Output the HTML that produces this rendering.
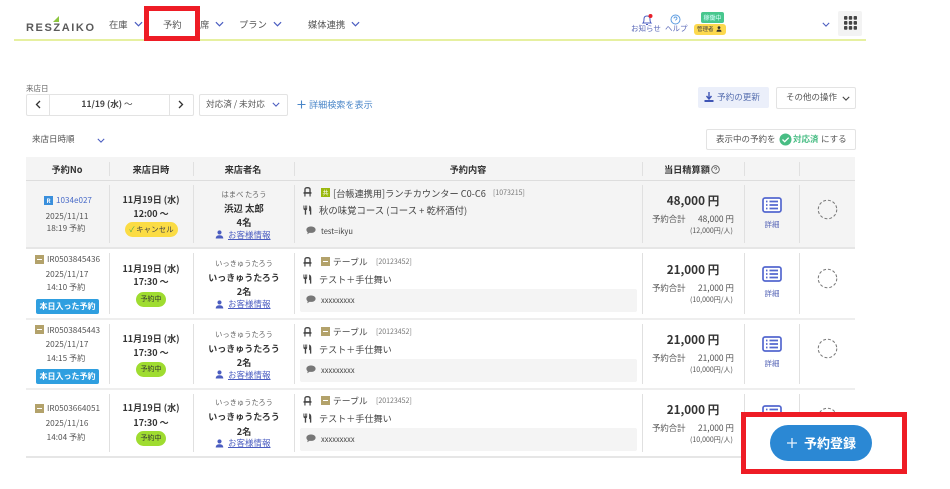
<!DOCTYPE html>
<html lang="ja"><head><meta charset="utf-8"><title>RESZAIKO</title>
<style>
html,body{margin:0;padding:0;background:#fff}
#p{position:relative;width:950px;height:489px;overflow:hidden;background:#fff;font-family:"Noto Sans CJK JP","Liberation Sans",sans-serif;color:#444;font-size:9px;filter:blur(.35px)}
#p div,#p span.a,#p svg{position:absolute}
.t{white-space:nowrap;line-height:1;margin-top:1px}
.c{white-space:nowrap;line-height:1;margin-top:1px;transform:translateX(-50%);text-align:center}
.b{font-weight:700;color:#333}
.bg{background:#f4f4f4}
.sep{width:1px;background:#e0e0e0}
.badge{border-radius:8px;text-align:center;white-space:nowrap}
.lnk{color:#4a5cc0;text-decoration:underline}
.gold{width:9px;height:9px;background:#b3a26b}
.gold:after{content:"";position:absolute;left:2px;top:4px;width:5px;height:1.4px;background:#fff}
.box{position:absolute;border:5px solid #ee1c25;box-sizing:border-box}
</style></head><body><div id="p">
<svg width="0" height="0" style="position:absolute"><defs>
<symbol id="chair" viewBox="0 0 10 11"><path d="M2.200 6V2.500C2.200 1.300 3.200.7 5 .7s2.800.6 2.800 1.800V6" fill="none" stroke="#444" stroke-width="1.500"/><path d="M.6 5.600h8.800v1.800H.6zM1.500 7.400h1.300v3.100H1.500zM7.200 7.400h1.300v3.100H7.200z" fill="#444"/></symbol>
<symbol id="fork" viewBox="0 0 10 11"><path d="M.5.500h.9v3h.7v-3h.9v3h.7v-3h.9v3.800c0 .7-.5 1.200-1.100 1.400v5H2v-5C1 5.500.5 5 .5 4.300zM6.800.500c1.400.3 2.400 1.600 2.400 3.700v6.500H7.700V6.700H6.800z" fill="#444"/></symbol>
<symbol id="msg" viewBox="0 0 10 9"><path d="M5 .5C7.600.5 9.600 1.800 9.600 3.700S7.600 6.900 5 6.900c-.5 0-.9 0-1.300-.1L1.200 8.300l.5-2.100C.9 5.600.4 4.700.4 3.700.4 1.800 2.400.5 5 .5z" fill="#777"/></symbol>
<symbol id="user" viewBox="0 0 10 10"><circle cx="5" cy="2.700" r="2.300" fill="#4a5cc0"/><path d="M.8 9.500C.8 6.900 2.500 5.800 5 5.800s4.200 1.100 4.200 3.700z" fill="#4a5cc0"/></symbol>
<symbol id="list" viewBox="0 0 20 16"><rect x="1" y="1" width="18" height="14" rx="2" fill="#fff" stroke="#5468cf" stroke-width="1.700"/><path d="M7.500 4.500h8.500M7.500 8h8.500M7.500 11.500h8.500M4 4.500h1.500M4 8h1.500M4 11.500h1.500" stroke="#5468cf" stroke-width="1.700"/></symbol>
<symbol id="circ" viewBox="0 0 22 22"><circle cx="11" cy="11" r="9.700" fill="none" stroke="#777" stroke-width="1.100" stroke-dasharray="3 2.100"/></symbol>
<symbol id="down" viewBox="0 0 10 6"><path d="M1 1l4 4 4-4" fill="none" stroke="#4a5cc0" stroke-width="1.300"/></symbol>
</defs></svg>

<!-- header -->
<div style="left:14px;top:39px;width:852px;height:2px;background:#e6f0a0"></div>
<div class="t" style="left:26px;top:22px;font-family:'Liberation Sans',sans-serif;font-size:11px;font-weight:700;letter-spacing:1.600px;color:#5a5a5a">RESZAIKO</div>
<svg style="left:53px;top:16px" width="7" height="6"><path d="M0 6L6 0v6z" fill="#8cc63f"/></svg>
<div class="t" style="left:109px;top:19px;font-size:9.300px;color:#555">在庫</div>
<svg style="left:134px;top:21px" width="9" height="6"><use href="#down"/></svg>
<div class="t" style="left:163px;top:19px;font-size:9.300px;color:#555">予約</div>
<div class="t" style="left:200px;top:19px;font-size:9.300px;color:#555">席</div>
<svg style="left:215px;top:21px" width="9" height="6"><use href="#down"/></svg>
<div class="t" style="left:239px;top:19px;font-size:9.300px;color:#555">プラン</div>
<svg style="left:273px;top:21px" width="9" height="6"><use href="#down"/></svg>
<div class="t" style="left:308px;top:19px;font-size:9.300px;color:#555">媒体連携</div>
<svg style="left:351px;top:21px" width="9" height="6"><use href="#down"/></svg>
<div class="box" style="left:144px;top:6px;width:56px;height:35px"></div>

<svg style="left:641px;top:14px" width="12" height="12" viewBox="0 0 12 12"><path d="M2 9c1-1 1-2 1-4s1-3 3-3 3 1 3 3 0 3 1 4zM5 10.500h2" fill="none" stroke="#4a5cc0" stroke-width="1"/><circle cx="9.500" cy="2" r="2" fill="#e8202a"/></svg>
<div class="t" style="left:631px;top:24px;font-size:7.500px;color:#5a68b8">お知らせ</div>
<svg style="left:670px;top:14px" width="11" height="11" viewBox="0 0 11 11"><circle cx="5.500" cy="5.500" r="4.500" fill="none" stroke="#5b9be0" stroke-width="1"/><path d="M4 4.500c0-2 3-2 3 0 0 1-1.500 1-1.500 2" fill="none" stroke="#5b9be0" stroke-width=".9"/></svg>
<div class="t" style="left:665px;top:24px;font-size:7.500px;color:#5a68b8">ヘルプ</div>
<div class="badge" style="left:701px;top:12px;width:23px;height:11px;border-radius:2px;background:#48c78e;color:#dff;font-size:6px;line-height:11px">稼働中</div>
<div class="badge" style="left:694px;top:24px;width:32px;height:11px;border-radius:3px;background:#fdd94e;color:#444;font-size:5.500px;line-height:11px;text-align:left;text-indent:3px">管理者</div>
<svg style="left:716px;top:26px" width="6" height="6" viewBox="0 0 10 10"><circle cx="5" cy="2.700" r="2.300" fill="#333"/><path d="M.8 9.500C.8 6.900 2.500 5.800 5 5.800s4.200 1.100 4.200 3.700z" fill="#333"/></svg>
<svg style="left:822px;top:22px" width="8" height="5"><use href="#down"/></svg>
<div style="left:838px;top:11px;width:24px;height:25px;background:#f3f3f3;border-radius:2px"></div>
<svg style="left:844px;top:16px" width="13" height="14" viewBox="0 0 13 14" fill="#444"><rect x="0" y="0" width="3.400" height="3.800" rx=".9"/><rect x="4.800" y="0" width="3.400" height="3.800" rx=".9"/><rect x="9.600" y="0" width="3.400" height="3.800" rx=".9"/><rect x="0" y="5" width="3.400" height="3.800" rx=".9"/><rect x="4.800" y="5" width="3.400" height="3.800" rx=".9"/><rect x="9.600" y="5" width="3.400" height="3.800" rx=".9"/><rect x="0" y="10" width="3.400" height="3.800" rx=".9"/><rect x="4.800" y="10" width="3.400" height="3.800" rx=".9"/><rect x="9.600" y="10" width="3.400" height="3.800" rx=".9"/></svg>

<!-- filters -->
<div class="t" style="left:26px;top:84px;font-size:7.500px;color:#666">来店日</div>
<div style="left:26px;top:94px;width:166px;height:20px;border:1px solid #e3e3e3;border-radius:2px"></div>
<div class="sep" style="left:49px;top:95px;height:20px;background:#e3e3e3"></div>
<div class="sep" style="left:169px;top:95px;height:20px;background:#e3e3e3"></div>
<svg style="left:35px;top:100px" width="6" height="9"><path d="M5 1L1.500 4.500 5 8" fill="none" stroke="#333" stroke-width="1.300"/></svg>
<svg style="left:178px;top:100px" width="6" height="9"><path d="M1 1l3.500 3.500L1 8" fill="none" stroke="#333" stroke-width="1.300"/></svg>
<div class="c b" style="left:107px;top:99px;font-size:8.600px;color:#444">11/19 (水) <span style="font-weight:400">〜</span></div>
<div style="left:199px;top:94px;width:87px;height:20px;border:1px solid #e3e3e3;border-radius:2px"></div>
<div class="t" style="left:206px;top:99px;font-size:8.600px;color:#555">対応済 / 未対応</div>
<svg style="left:272px;top:102px" width="8" height="5"><use href="#down"/></svg>
<svg style="left:297px;top:100px" width="9" height="9"><path d="M4.500 .5v8M.5 4.500h8" stroke="#4a86c8" stroke-width="1.100"/></svg>
<div class="t" style="left:309px;top:99px;font-size:9.100px;color:#4a86c8">詳細検索を表示</div>
<div style="left:698px;top:87px;width:71px;height:21px;background:#ebeffa;border-radius:2px"></div>
<svg style="left:704px;top:92px" width="10" height="11" viewBox="0 0 10 11"><path d="M5 0v6M2.500 4L5 7l2.500-3" fill="none" stroke="#3f55b5" stroke-width="1.400"/><path d="M.5 8h9v2h-9z" fill="#3f55b5"/></svg>
<div class="t" style="left:717px;top:92px;font-size:8.600px;color:#5870b0">予約の更新</div>
<div style="left:776px;top:87px;width:78px;height:20px;border:1px solid #e3e3e3;border-radius:2px"></div>
<div class="t" style="left:786px;top:92px;font-size:8.500px;color:#555">その他の操作</div>
<svg style="left:842px;top:96px" width="8" height="5" viewBox="0 0 10 6"><path d="M1 1l4 4 4-4" fill="none" stroke="#444" stroke-width="1.400"/></svg>

<div class="t" style="left:32px;top:134px;font-size:8.500px;color:#555">来店日時順</div>
<svg style="left:97px;top:138px" width="8" height="5"><use href="#down"/></svg>
<div style="left:706px;top:129px;width:148px;height:19px;border:1px solid #e3e3e3;border-radius:2px"></div>
<div class="t" style="left:716px;top:134px;font-size:8.500px;color:#555">表示中の予約を</div>
<svg style="left:779px;top:133px" width="13" height="13" viewBox="0 0 13 13"><circle cx="6.500" cy="6.500" r="6" fill="#48bd84"/><path d="M3.500 6.500l2.200 2.200 4-4" fill="none" stroke="#fff" stroke-width="1.300"/></svg>
<div class="t" style="left:793px;top:134px;font-size:8.500px;color:#48bd84;font-weight:700">対応済</div>
<div class="t" style="left:821px;top:134px;font-size:8.500px;color:#555">にする</div>

<!-- table -->
<div class="bg" style="left:26px;top:157px;width:829px;height:90px"></div>
<div style="left:26px;top:180px;width:829px;height:1px;background:#ddd"></div>
<div style="left:26px;top:247px;width:829px;height:1.500px;background:#e6e6e6"></div>
<div style="left:26px;top:318px;width:829px;height:1.500px;background:#eee"></div>
<div style="left:26px;top:388px;width:829px;height:1.500px;background:#eee"></div>
<div style="left:26px;top:456px;width:829px;height:1.500px;background:#e6e6e6"></div>

<div class="sep" style="left:109px;top:162px;height:14px"></div><div class="sep" style="left:193px;top:162px;height:14px"></div><div class="sep" style="left:294px;top:162px;height:14px"></div><div class="sep" style="left:642px;top:162px;height:14px"></div><div class="sep" style="left:744px;top:162px;height:14px"></div><div class="sep" style="left:799px;top:162px;height:14px"></div>
<div class="sep" style="left:109px;top:185px;height:58px"></div><div class="sep" style="left:193px;top:185px;height:58px"></div><div class="sep" style="left:294px;top:185px;height:58px"></div><div class="sep" style="left:642px;top:185px;height:58px"></div><div class="sep" style="left:744px;top:185px;height:58px"></div><div class="sep" style="left:799px;top:185px;height:58px"></div>
<div class="sep" style="left:109px;top:253px;height:61px"></div><div class="sep" style="left:193px;top:253px;height:61px"></div><div class="sep" style="left:294px;top:253px;height:61px"></div><div class="sep" style="left:642px;top:253px;height:61px"></div><div class="sep" style="left:744px;top:253px;height:61px"></div><div class="sep" style="left:799px;top:253px;height:61px"></div>
<div class="sep" style="left:109px;top:324px;height:60px"></div><div class="sep" style="left:193px;top:324px;height:60px"></div><div class="sep" style="left:294px;top:324px;height:60px"></div><div class="sep" style="left:642px;top:324px;height:60px"></div><div class="sep" style="left:744px;top:324px;height:60px"></div><div class="sep" style="left:799px;top:324px;height:60px"></div>
<div class="sep" style="left:109px;top:394px;height:58px"></div><div class="sep" style="left:193px;top:394px;height:58px"></div><div class="sep" style="left:294px;top:394px;height:58px"></div><div class="sep" style="left:642px;top:394px;height:58px"></div><div class="sep" style="left:744px;top:394px;height:58px"></div><div class="sep" style="left:799px;top:394px;height:58px"></div>

<div class="c b" style="left:67px;top:164px;font-size:9.200px">予約No</div>
<div class="c b" style="left:151px;top:164px;font-size:9.200px">来店日時</div>
<div class="c b" style="left:243px;top:164px;font-size:9.200px">来店者名</div>
<div class="c b" style="left:468px;top:164px;font-size:9.200px">予約内容</div>
<div class="t b" style="left:664px;top:164px;font-size:9.200px">当日精算額</div>
<svg style="left:711px;top:165px" width="9" height="9" viewBox="0 0 9 9"><circle cx="4.500" cy="4.500" r="3.800" fill="none" stroke="#555" stroke-width=".8"/><path d="M3.200 3.700c0-1.400 2.600-1.400 2.600 0 0 .8-1.300.8-1.300 1.600" fill="none" stroke="#555" stroke-width=".7"/></svg>

<!-- row 1 -->
<div style="left:44px;top:196px;width:9px;height:9px;background:#3a8fdc;color:#fff;font-size:6px;line-height:9px;text-align:center;font-weight:700">R</div>
<div class="t" style="left:56px;top:196px;font-size:8.100px;color:#4a6cc8">1034e027</div>
<div class="c" style="left:67px;top:211px;font-size:8.200px;color:#555">2025/11/11</div>
<div class="c" style="left:66px;top:223px;font-size:8.200px;color:#555">18:19 予約</div>
<div class="c b" style="left:151px;top:194px;font-size:9px">11月19日 (水)</div>
<div class="c b" style="left:151px;top:208px;font-size:9px">12:00 〜</div>
<div class="badge" style="left:125px;top:222px;width:53px;height:15px;background:#fbdc44;border-radius:8px;font-size:7.500px;line-height:15px;color:#444"><span style="color:#4aa84a">✓</span> キャンセル</div>
<div class="c" style="left:244px;top:191px;font-size:7.300px;color:#666">はまべ たろう</div>
<div class="c b" style="left:244px;top:203px;font-size:9.400px">浜辺 太郎</div>
<div class="c b" style="left:244px;top:217px;font-size:9.400px">4名</div>
<svg style="left:215px;top:230px" width="9" height="9"><use href="#user"/></svg>
<div class="t lnk" style="left:228px;top:230px;font-size:8.500px">お客様情報</div>
<svg style="left:303px;top:187px" width="9" height="10"><use href="#chair"/></svg>
<div style="left:321px;top:188px;width:9px;height:9px;background:#9ab80e;color:#fff;font-size:6px;line-height:9px;text-align:center">共</div>
<div class="t" style="left:333px;top:188px;font-size:9.200px">[台帳連携用]ランチカウンター C0-C6</div>
<div class="t" style="left:493px;top:189px;font-size:7px;color:#777">[1073215]</div>
<svg style="left:303px;top:205px" width="9" height="10"><use href="#fork"/></svg>
<div class="t" style="left:319px;top:205px;font-size:9.400px">秋の味覚コース (コース + 乾杯酒付)</div>
<svg style="left:306px;top:226px" width="10" height="9"><use href="#msg"/></svg>
<div class="t" style="left:321px;top:227px;font-size:7.500px">test=ikyu</div>
<div class="c b" style="left:693px;top:194px;font-size:11.700px">48,000 円</div>
<div class="t" style="left:652px;top:214px;font-size:8.400px;color:#555">予約合計</div>
<div class="t" style="left:698px;top:214px;font-size:8.400px;color:#555">48,000 円</div>
<div class="t" style="left:690px;top:227px;font-size:7px;color:#555">(12,000円/人)</div>
<svg style="left:762px;top:197px" width="20" height="16"><use href="#list"/></svg>
<div class="c" style="left:772px;top:220px;font-size:7.500px;color:#5a68b8">詳細</div>
<svg style="left:817px;top:199px" width="21" height="21"><use href="#circ"/></svg>

<!-- row 2 -->
<div class="gold" style="left:35px;top:255px"></div>
<div class="t" style="left:47px;top:254px;font-size:8.200px;color:#555">IR0503845436</div>
<div class="c" style="left:67px;top:269px;font-size:8.200px;color:#555">2025/11/17</div>
<div class="c" style="left:66px;top:282px;font-size:8.200px;color:#555">14:10 予約</div>
<div class="badge" style="left:36px;top:299px;width:63px;height:15px;background:#2f9fe0;border-radius:2px;color:#fff;font-weight:700;font-size:8px;line-height:15px">本日入った予約</div>
<div class="c b" style="left:151px;top:263px;font-size:9px">11月19日 (水)</div>
<div class="c b" style="left:151px;top:276px;font-size:9px">17:30 〜</div>
<div class="badge" style="left:136px;top:292px;width:30px;height:15px;background:#9fdc30;font-size:7px;line-height:15px;color:#333">予約中</div>
<div class="c" style="left:244px;top:260px;font-size:7.300px;color:#666">いっきゅうたろう</div>
<div class="c b" style="left:244px;top:272px;font-size:9px">いっきゅうたろう</div>
<div class="c b" style="left:244px;top:286px;font-size:9.200px">2名</div>
<svg style="left:215px;top:300px" width="9" height="9"><use href="#user"/></svg>
<div class="t lnk" style="left:228px;top:299px;font-size:8.500px">お客様情報</div>
<svg style="left:303px;top:257px" width="9" height="10"><use href="#chair"/></svg>
<div class="gold" style="left:321px;top:257px"></div>
<div class="t" style="left:333px;top:257px;font-size:8.800px">テーブル</div>
<div class="t" style="left:376px;top:258px;font-size:7px;color:#777">[20123452]</div>
<svg style="left:303px;top:274px" width="9" height="10"><use href="#fork"/></svg>
<div class="t" style="left:319px;top:274px;font-size:9.100px">テスト＋手仕舞い</div>
<div style="left:300px;top:289px;width:337px;height:23px;background:#f4f4f4;border-radius:2px"></div>
<svg style="left:306px;top:295px" width="10" height="9"><use href="#msg"/></svg>
<div class="t" style="left:321px;top:296px;font-size:7.500px">xxxxxxxxx</div>
<div class="c b" style="left:693px;top:263px;font-size:11.700px">21,000 円</div>
<div class="t" style="left:652px;top:283px;font-size:8.400px;color:#555">予約合計</div>
<div class="t" style="left:698px;top:283px;font-size:8.400px;color:#555">21,000 円</div>
<div class="t" style="left:690px;top:296px;font-size:7px;color:#555">(10,000円/人)</div>
<svg style="left:762px;top:266px" width="20" height="16"><use href="#list"/></svg>
<div class="c" style="left:772px;top:289px;font-size:7.500px;color:#5a68b8">詳細</div>
<svg style="left:817px;top:268px" width="21" height="21"><use href="#circ"/></svg>

<!-- row 3 -->
<div class="gold" style="left:35px;top:325px"></div>
<div class="t" style="left:47px;top:325px;font-size:8.200px;color:#555">IR0503845443</div>
<div class="c" style="left:67px;top:339px;font-size:8.200px;color:#555">2025/11/17</div>
<div class="c" style="left:66px;top:353px;font-size:8.200px;color:#555">14:15 予約</div>
<div class="badge" style="left:36px;top:369px;width:63px;height:15px;background:#2f9fe0;border-radius:2px;color:#fff;font-weight:700;font-size:8px;line-height:15px">本日入った予約</div>
<div class="c b" style="left:151px;top:333px;font-size:9px">11月19日 (水)</div>
<div class="c b" style="left:151px;top:347px;font-size:9px">17:30 〜</div>
<div class="badge" style="left:136px;top:362px;width:30px;height:15px;background:#9fdc30;font-size:7px;line-height:15px;color:#333">予約中</div>
<div class="c" style="left:244px;top:331px;font-size:7.300px;color:#666">いっきゅうたろう</div>
<div class="c b" style="left:244px;top:343px;font-size:9px">いっきゅうたろう</div>
<div class="c b" style="left:244px;top:357px;font-size:9.200px">2名</div>
<svg style="left:215px;top:370px" width="9" height="9"><use href="#user"/></svg>
<div class="t lnk" style="left:228px;top:370px;font-size:8.500px">お客様情報</div>
<svg style="left:303px;top:327px" width="9" height="10"><use href="#chair"/></svg>
<div class="gold" style="left:321px;top:327px"></div>
<div class="t" style="left:333px;top:327px;font-size:8.800px">テーブル</div>
<div class="t" style="left:376px;top:328px;font-size:7px;color:#777">[20123452]</div>
<svg style="left:303px;top:344px" width="9" height="10"><use href="#fork"/></svg>
<div class="t" style="left:319px;top:344px;font-size:9.100px">テスト＋手仕舞い</div>
<div style="left:300px;top:359px;width:337px;height:23px;background:#f4f4f4;border-radius:2px"></div>
<svg style="left:306px;top:365px" width="10" height="9"><use href="#msg"/></svg>
<div class="t" style="left:321px;top:366px;font-size:7.500px">xxxxxxxxx</div>
<div class="c b" style="left:693px;top:333px;font-size:11.700px">21,000 円</div>
<div class="t" style="left:652px;top:353px;font-size:8.400px;color:#555">予約合計</div>
<div class="t" style="left:698px;top:353px;font-size:8.400px;color:#555">21,000 円</div>
<div class="t" style="left:690px;top:366px;font-size:7px;color:#555">(10,000円/人)</div>
<svg style="left:762px;top:336px" width="20" height="16"><use href="#list"/></svg>
<div class="c" style="left:772px;top:359px;font-size:7.500px;color:#5a68b8">詳細</div>
<svg style="left:817px;top:338px" width="21" height="21"><use href="#circ"/></svg>

<!-- row 4 -->
<div class="gold" style="left:35px;top:404px"></div>
<div class="t" style="left:47px;top:403px;font-size:8.200px;color:#555">IR0503664051</div>
<div class="c" style="left:67px;top:418px;font-size:8.200px;color:#555">2025/11/16</div>
<div class="c" style="left:66px;top:432px;font-size:8.200px;color:#555">14:04 予約</div>
<div class="c b" style="left:151px;top:402px;font-size:9px">11月19日 (水)</div>
<div class="c b" style="left:151px;top:417px;font-size:9px">17:30 〜</div>
<div class="badge" style="left:136px;top:431px;width:30px;height:15px;background:#9fdc30;font-size:7px;line-height:15px;color:#333">予約中</div>
<div class="c" style="left:244px;top:399px;font-size:7.300px;color:#666">いっきゅうたろう</div>
<div class="c b" style="left:244px;top:411px;font-size:9px">いっきゅうたろう</div>
<div class="c b" style="left:244px;top:426px;font-size:9.200px">2名</div>
<svg style="left:215px;top:439px" width="9" height="9"><use href="#user"/></svg>
<div class="t lnk" style="left:228px;top:438px;font-size:8.500px">お客様情報</div>
<svg style="left:303px;top:396px" width="9" height="10"><use href="#chair"/></svg>
<div class="gold" style="left:321px;top:396px"></div>
<div class="t" style="left:333px;top:396px;font-size:8.800px">テーブル</div>
<div class="t" style="left:376px;top:397px;font-size:7px;color:#777">[20123452]</div>
<svg style="left:303px;top:413px" width="9" height="10"><use href="#fork"/></svg>
<div class="t" style="left:319px;top:413px;font-size:9.100px">テスト＋手仕舞い</div>
<div style="left:300px;top:428px;width:337px;height:23px;background:#f4f4f4;border-radius:2px"></div>
<svg style="left:306px;top:434px" width="10" height="9"><use href="#msg"/></svg>
<div class="t" style="left:321px;top:435px;font-size:7.500px">xxxxxxxxx</div>
<div class="c b" style="left:693px;top:403px;font-size:11.700px">21,000 円</div>
<div class="t" style="left:652px;top:423px;font-size:8.400px;color:#555">予約合計</div>
<div class="t" style="left:698px;top:423px;font-size:8.400px;color:#555">21,000 円</div>
<div class="t" style="left:690px;top:436px;font-size:7px;color:#555">(10,000円/人)</div>
<svg style="left:762px;top:405px" width="20" height="16"><use href="#list"/></svg>
<svg style="left:817px;top:407px" width="21" height="21"><use href="#circ"/></svg>

<!-- overlay -->
<div style="left:741px;top:412px;width:166px;height:62px;background:#fff"></div>
<div class="box" style="left:741px;top:412px;width:166px;height:62px"></div>
<div style="left:770px;top:425px;width:102px;height:36px;border-radius:18px;background:#2b88d4"></div>
<svg style="left:786px;top:437px" width="12" height="12"><path d="M6 1v10M1 6h10" stroke="#e8f2fb" stroke-width="1.300"/></svg>
<div class="t" style="left:804px;top:435px;font-size:13px;font-weight:700;color:#fff">予約登録</div>
</div></body></html>
